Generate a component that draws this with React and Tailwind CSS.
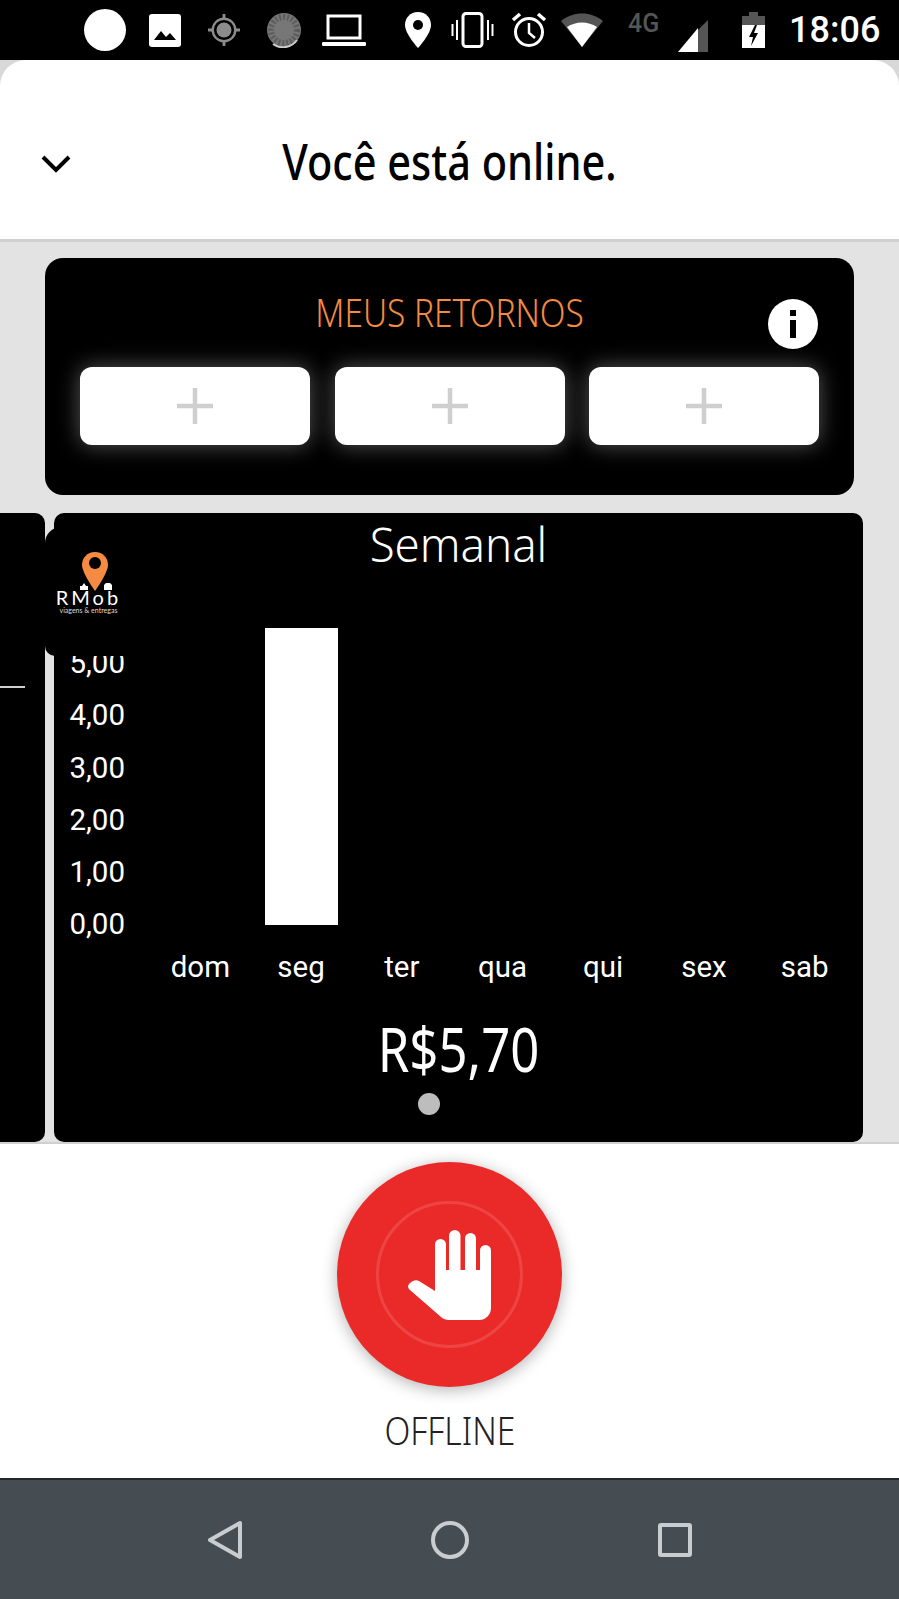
import React from 'react';

const days = ['dom', 'seg', 'ter', 'qua', 'qui', 'sex', 'sab'];
const ticks = ['5,00', '4,00', '3,00', '2,00', '1,00', '0,00'];

function StatusBar() {
  return (
    <div className="flex h-[60px] shrink-0 items-center bg-black pl-[84px] text-white">
      <div className="h-[42px] w-[42px] rounded-full bg-white" />
      <svg className="ml-[23px]" width="32" height="33" viewBox="0 0 32 33">
        <rect width="32" height="33" rx="3" fill="#fff" />
        <path d="M5 26l7-9 5 6 4-4 6 7z" fill="#000" />
      </svg>
      <svg className="ml-[27px]" width="32" height="34" viewBox="0 0 34 34">
        <circle cx="17" cy="17" r="8" fill="#8c8c8c" />
        <circle cx="17" cy="17" r="12" fill="none" stroke="#8c8c8c" strokeWidth="2.500" />
        <path d="M17 0v6M17 28v6M0 17h6M28 17h6" stroke="#8c8c8c" strokeWidth="3" />
      </svg>
      <svg className="ml-[26px]" width="36" height="36" viewBox="0 0 36 36">
        <circle cx="18" cy="18" r="17" fill="#777" />
        <circle cx="18" cy="18" r="13" fill="none" stroke="#5c5c5c" strokeWidth="6" strokeDasharray="2 2" />
        <path d="M31 28a17 17 0 0 1-24 4" fill="none" stroke="#ccc" strokeWidth="2" />
      </svg>
      <svg className="ml-[20px]" width="44" height="32" viewBox="0 0 44 32">
        <rect x="6" y="2" width="32" height="22" fill="none" stroke="#fff" strokeWidth="3" />
        <rect x="0" y="28" width="44" height="4" rx="1" fill="#fff" />
      </svg>
      <svg className="ml-[38px]" width="28" height="36" viewBox="0 0 28 36">
        <path d="M14 0C6 0 1 6 1 13c0 9 13 23 13 23s13-14 13-23C27 6 22 0 14 0z" fill="#fff" />
        <circle cx="14" cy="13" r="5" fill="#000" />
      </svg>
      <svg className="ml-[19px]" width="43" height="36" viewBox="0 0 43 36">
        <rect x="12" y="1.5" width="19" height="33" rx="3" fill="none" stroke="#fff" strokeWidth="3" />
        <path d="M6 8v20M1.500 12v12M37 8v20M41.500 12v12" stroke="#fff" strokeWidth="2" />
      </svg>
      <svg className="ml-[17px]" width="36" height="36" viewBox="0 0 36 36">
        <circle cx="18" cy="20" r="13.500" fill="none" stroke="#fff" strokeWidth="3" />
        <path d="M18 11v10l6 5" fill="none" stroke="#fff" strokeWidth="2.500" />
        <path d="M2 8l7-6M34 8l-7-6" stroke="#fff" strokeWidth="3.500" />
      </svg>
      <svg className="ml-[14px]" width="42" height="34" viewBox="0 0 42 34">
        <path d="M0 8C12-2 30-2 42 8L21 34z" fill="#555" />
        <path d="M6 14c9-6 21-6 30 0L21 34z" fill="#fff" />
      </svg>
      <div className="mb-[14px] ml-[25px] w-[38px] whitespace-nowrap font-['Roboto',sans-serif] text-[25px] leading-none font-medium text-[#555]">4G</div>
      <svg className="ml-[12px] mt-[12px]" width="30" height="32" viewBox="0 0 30 32">
        <path d="M30 0v32H20V10z" fill="#555" />
        <path d="M20 8v24H0z" fill="#fff" />
      </svg>
      <svg className="ml-[34px]" width="23" height="36" viewBox="0 0 23 36">
        <path d="M7 0h9v4h7v9H0V4h7z" fill="#555" />
        <path d="M0 13h23v23H0z" fill="#fff" />
        <path d="M13 13l-6 12h4l-2 9 7-13h-4l3-8z" fill="#000" />
      </svg>
      <div className="ml-[24px] font-['Roboto',sans-serif] text-[36px] leading-none font-medium">18:06</div>
    </div>
  );
}

function Header() {
  return (
    <div className="relative flex h-[182px] shrink-0 items-center justify-center rounded-t-[26px] border-b-[3px] border-[#d0d0d0] bg-white">
      <svg className="absolute left-[41px] top-[94px]" width="30" height="20" viewBox="0 0 30 20">
        <path d="M2 3l13 13L28 3" fill="none" stroke="#000" strokeWidth="4" />
      </svg>
      <h1 className="mt-[23px] origin-center scale-x-[0.83] whitespace-nowrap font-['Noto_Sans',sans-serif] text-[50px] leading-none font-medium text-black">
        Você está online.
      </h1>
    </div>
  );
}

function ReturnButton() {
  return (
    <div className="flex h-[78px] w-[230px] items-center justify-center rounded-[12px] bg-white shadow-[0_0_22px_rgba(255,255,255,0.35)]">
      <svg width="36" height="36" viewBox="0 0 36 36">
        <path d="M18 0v36M0 18h36" stroke="#cfcfcf" strokeWidth="4.500" />
      </svg>
    </div>
  );
}

function Returns() {
  return (
    <div className="relative mx-[45px] mt-[16px] h-[237px] rounded-[18px] bg-black">
      <div className="pt-[30px] text-center">
        <span className="inline-block scale-x-[0.88] whitespace-nowrap font-['Noto_Sans',sans-serif] text-[38px] leading-[48px] font-light text-[#f58a42]">
          MEUS RETORNOS
        </span>
      </div>
      <div className="absolute right-[36px] top-[41px] flex h-[50px] w-[50px] items-center justify-center rounded-full bg-white">
        <svg width="8" height="28" viewBox="0 0 8 28">
          <rect x="1" y="0" width="6" height="6" fill="#000" />
          <rect x="1" y="10" width="6" height="18" fill="#000" />
        </svg>
      </div>
      <div className="mt-[31px] flex justify-between pl-[35px] pr-[35px]">
        <ReturnButton />
        <ReturnButton />
        <ReturnButton />
      </div>
    </div>
  );
}

function Chart() {
  return (
    <div className="flex">
      <div className="mt-[22px] w-[73px] pr-[2px] text-right font-['Roboto',sans-serif] text-[29.500px] leading-[52.300px] text-white">
        {ticks.map((t) => (
          <div key={t}>{t}</div>
        ))}
      </div>
      <div className="ml-[23px] grid w-[705px] grid-cols-7">
        {days.map((d, i) => (
          <div key={d} className="flex flex-col items-center">
            <div className="flex h-[310px] w-[73px] items-end">
              {i === 1 && <div className="h-[297px] w-full bg-white" />}
            </div>
            <div className="mt-[24px] font-['Roboto',sans-serif] text-[29.500px] leading-[36px] text-white">{d}</div>
          </div>
        ))}
      </div>
    </div>
  );
}

function Logo() {
  return (
    <div className="absolute left-[45px] top-[14px] z-10 flex h-[129px] w-[90px] flex-col items-center rounded-bl-[10px] rounded-tl-[16px] bg-black pt-[25px]">
      <div className="relative ml-[8px] h-[46px] w-[60px]">
        <svg className="absolute left-[18px] top-0" width="26" height="39" viewBox="0 0 26 39">
          <path d="M13 0C5 0 0 6 0 13c0 8 13 26 13 26s13-18 13-26C26 6 21 0 13 0z" fill="#f58a42" />
          <circle cx="13" cy="11" r="6" fill="#000" />
        </svg>
        <svg className="absolute left-[16px] top-[30px]" width="32" height="9" viewBox="0 0 32 9">
          <path d="M0 8V4h2l2-3 2 3h2v4zM24 8V3l2-2h4l2 2v5z" fill="#fff" />
        </svg>
      </div>
      <div className="-ml-[3px] -mt-[11px] whitespace-nowrap font-['Lato',sans-serif] text-[20px] leading-[20px] tracking-[3px] text-white">RMob</div>
      <div className="-ml-[3px] -mt-[2px] whitespace-nowrap font-['Lato',sans-serif] text-[7px] leading-[10px] text-[#ddd]">viagens &amp; entregas</div>
    </div>
  );
}

function Carousel() {
  return (
    <div className="relative mt-[18px] flex h-[629px] gap-[9px]">
      <div className="relative w-[45px] rounded-r-[10px] bg-black">
        <div className="absolute left-0 top-[173px] h-[2px] w-[25px] bg-[#cfcfcf]" />
      </div>
      <div className="w-[809px] rounded-[10px] bg-black">
        <div className="pt-[2px] text-center">
          <span className="inline-block scale-x-[0.95] whitespace-nowrap font-['Noto_Sans',sans-serif] text-[48px] leading-[58px] font-light text-white">
            Semanal
          </span>
        </div>
        <div className="mt-[42px]">
          <Chart />
        </div>
        <div className="mt-[25px] text-center">
          <span className="inline-block scale-x-[0.82] whitespace-nowrap font-['Noto_Sans',sans-serif] text-[62px] leading-[76px] text-white">
            R$5,70
          </span>
        </div>
        <div className="ml-[364px] mt-[7px] h-[22px] w-[22px] rounded-full bg-[#bdbdbd]" />
      </div>
      <Logo />
    </div>
  );
}

function HandIcon() {
  return (
    <svg width="100" height="100" viewBox="0 0 100 100">
      <g fill="#fff">
        <rect x="35" y="14" width="11" height="50" rx="5.500" />
        <rect x="49" y="5" width="11.500" height="60" rx="5.750" />
        <rect x="65" y="8" width="11" height="60" rx="5.500" />
        <rect x="80" y="20" width="11" height="50" rx="5.500" />
        <path d="M35 45h56v38a12 12 0 0 1-12 12H48a10 10 0 0 1-7-3L10 65c-3-3-2-5 0-7l3-2c2-1 4-1 6 0l16 10z" />
      </g>
    </svg>
  );
}

function OfflinePanel() {
  return (
    <div className="flex h-[336px] shrink-0 flex-col items-center border-t-2 border-[#d0d0d0] bg-white pt-[18px]">
      <div className="flex h-[225px] w-[225px] items-center justify-center rounded-full bg-[#e92a29] shadow-[0_3px_16px_rgba(0,0,0,0.3)]">
        <div className="flex h-[147px] w-[147px] items-center justify-center rounded-full border-[3px] border-[#ee4544]">
          <HandIcon />
        </div>
      </div>
      <div className="mt-[20px] scale-x-[0.885] font-['Noto_Sans',sans-serif] text-[38px] leading-[46px] font-light text-[#222]">OFFLINE</div>
    </div>
  );
}

function NavBar() {
  return (
    <div className="flex h-[121px] shrink-0 items-center border-t-2 border-[#23282c] bg-[#454c52] pl-[207px]">
      <svg width="36" height="40" viewBox="0 0 36 40">
        <path d="M33 3v34L3 20z" fill="none" stroke="#c9cdd0" strokeWidth="4" strokeLinejoin="round" />
      </svg>
      <svg className="ml-[188px]" width="38" height="38" viewBox="0 0 38 38">
        <circle cx="19" cy="19" r="17" fill="none" stroke="#c9cdd0" strokeWidth="4" />
      </svg>
      <svg className="ml-[188px]" width="36" height="36" viewBox="0 0 36 36">
        <rect x="3" y="3" width="30" height="30" rx="1" fill="none" stroke="#c9cdd0" strokeWidth="4" />
      </svg>
    </div>
  );
}

export default function App() {
  return (
    <div className="flex h-[1599px] w-[899px] flex-col overflow-hidden bg-[#d8d8d8]">
      <StatusBar />
      <Header />
      <div className="flex-1 bg-[#e3e3e3]">
        <Returns />
        <Carousel />
      </div>
      <OfflinePanel />
      <NavBar />
    </div>
  );
}
